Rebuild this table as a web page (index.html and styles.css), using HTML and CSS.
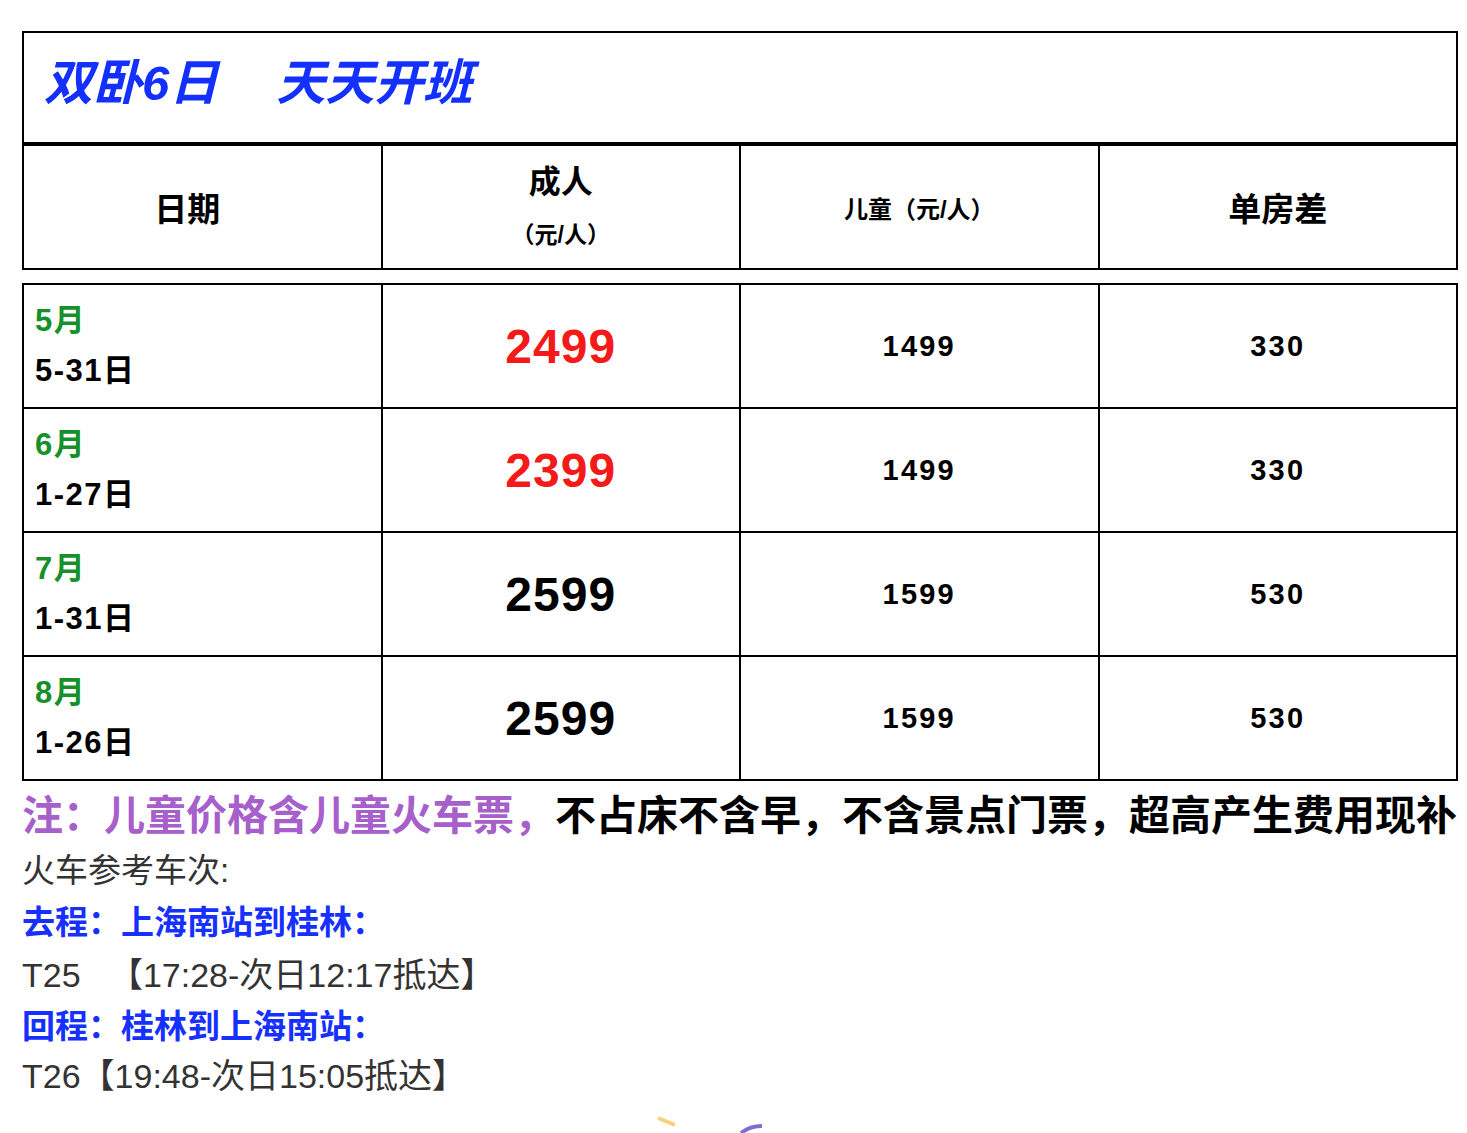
FILE: index.html
```html
<!DOCTYPE html>
<html lang="zh-CN">
<head>
<meta charset="utf-8">
<title>双卧6日 天天开班</title>
<link rel="stylesheet" href="styles.css">
</head>
<body>
<div class="sheet">
  <div class="tbl-top">
    <div class="title"><span>双卧6日</span><span class="title-gap">　</span><span>天天开班</span></div>
    <div class="grid head">
      <div class="cell h-date">日期</div>
      <div class="cell h-adult"><div class="h-big">成人</div><div class="h-small">（元/人）</div></div>
      <div class="cell h-small">儿童（元/人）</div>
      <div class="cell h-big">单房差</div>
    </div>
  </div>

  <div class="grid body">
    <div class="cell date"><div class="month">5月</div><div class="days">5-31日</div></div>
    <div class="cell price red">2499</div>
    <div class="cell num">1499</div>
    <div class="cell num">330</div>

    <div class="cell date"><div class="month">6月</div><div class="days">1-27日</div></div>
    <div class="cell price red">2399</div>
    <div class="cell num">1499</div>
    <div class="cell num">330</div>

    <div class="cell date"><div class="month">7月</div><div class="days">1-31日</div></div>
    <div class="cell price">2599</div>
    <div class="cell num">1599</div>
    <div class="cell num">530</div>

    <div class="cell date"><div class="month">8月</div><div class="days">1-26日</div></div>
    <div class="cell price">2599</div>
    <div class="cell num">1599</div>
    <div class="cell num">530</div>
  </div>

  <p class="note"><span class="purple">注：儿童价格含儿童火车票，</span>不占床不含早，不含景点门票，超高产生费用现补</p>
  <p class="line plain intro">火车参考车次:</p>
  <p class="line route">去程：上海南站到桂林：</p>
  <p class="line plain">T25&nbsp;&nbsp;&nbsp;【17:28-次日12:17抵达】</p>
  <p class="line route">回程：桂林到上海南站：</p>
  <p class="line plain last">T26【19:48-次日15:05抵达】</p>

  <svg class="deco" width="1435" height="34" viewBox="0 0 1435 34" aria-hidden="true">
    <line x1="636" y1="19" x2="653" y2="26" stroke="#fcd07a" stroke-width="4" stroke-linecap="butt"/>
    <path d="M719 34 Q728 27 740 27" fill="none" stroke="#7b70cf" stroke-width="4"/>
  </svg>
</div>
</body>
</html>
```

FILE: styles.css
```css
html, body {
  margin: 0;
  padding: 0;
  background: #ffffff;
}

body {
  font-family: "Liberation Sans", "Noto Sans CJK SC", sans-serif;
  color: #000;
  overflow: hidden;
  height: 1133px;
}

.sheet {
  width: 1436px;
  margin: 31px 0 0 22px;
}

.tbl-top {
  border: 2px solid #000;
}

.title {
  box-sizing: border-box;
  height: 113px;
  border-bottom: 4px solid #000;
  display: flex;
  align-items: center;
  padding: 0 0 18px 20px;
  font-size: 49px;
  font-weight: bold;
  font-style: italic;
  color: #1430ff;
  white-space: nowrap;
}

.title-gap {
  display: inline-block;
  width: 58px;
}

.grid {
  display: grid;
  grid-template-columns: repeat(4, 1fr);
  gap: 2px;
  background: #000;
}

.head {
  grid-template-rows: 122px;
}

.body {
  margin-top: 13px;
  padding: 2px;
  grid-template-rows: 122px 122px 122px 122px;
}

.cell {
  background: #fff;
  display: flex;
  flex-direction: column;
  align-items: center;
  justify-content: center;
  font-weight: bold;
}

.h-date {
  font-size: 33px;
  padding-right: 30px;
}

.h-big {
  font-size: 33px;
}

.h-small {
  font-size: 24px;
}

.h-adult .h-big {
  font-size: 32px;
  line-height: 54px;
  margin-top: 2px;
}

.h-adult .h-small {
  font-size: 23px;
  line-height: 52px;
}

.date {
  align-items: flex-start;
  padding-left: 11px;
  font-size: 31px;
  line-height: 50px;
  letter-spacing: 1.5px;
}

.month {
  color: #16902a;
}

.price {
  font-size: 48px;
  letter-spacing: 1px;
}

.red {
  color: #f51a1a;
}

.num {
  font-size: 29px;
  letter-spacing: 2.2px;
}

.note {
  margin: 6px 0 0 0;
  font-size: 41px;
  line-height: 58px;
  font-weight: bold;
  white-space: nowrap;
}

.purple {
  color: #a75fcb;
}

.line {
  margin: 0;
  font-size: 34px;
  line-height: 52px;
  white-space: nowrap;
}

.intro {
  font-size: 33px;
}

.plain {
  color: #333;
  font-weight: normal;
}

.route {
  font-size: 33px;
  color: #1530ff;
  font-weight: bold;
}

.last {
  line-height: 46px;
}

.deco {
  display: block;
}
```
